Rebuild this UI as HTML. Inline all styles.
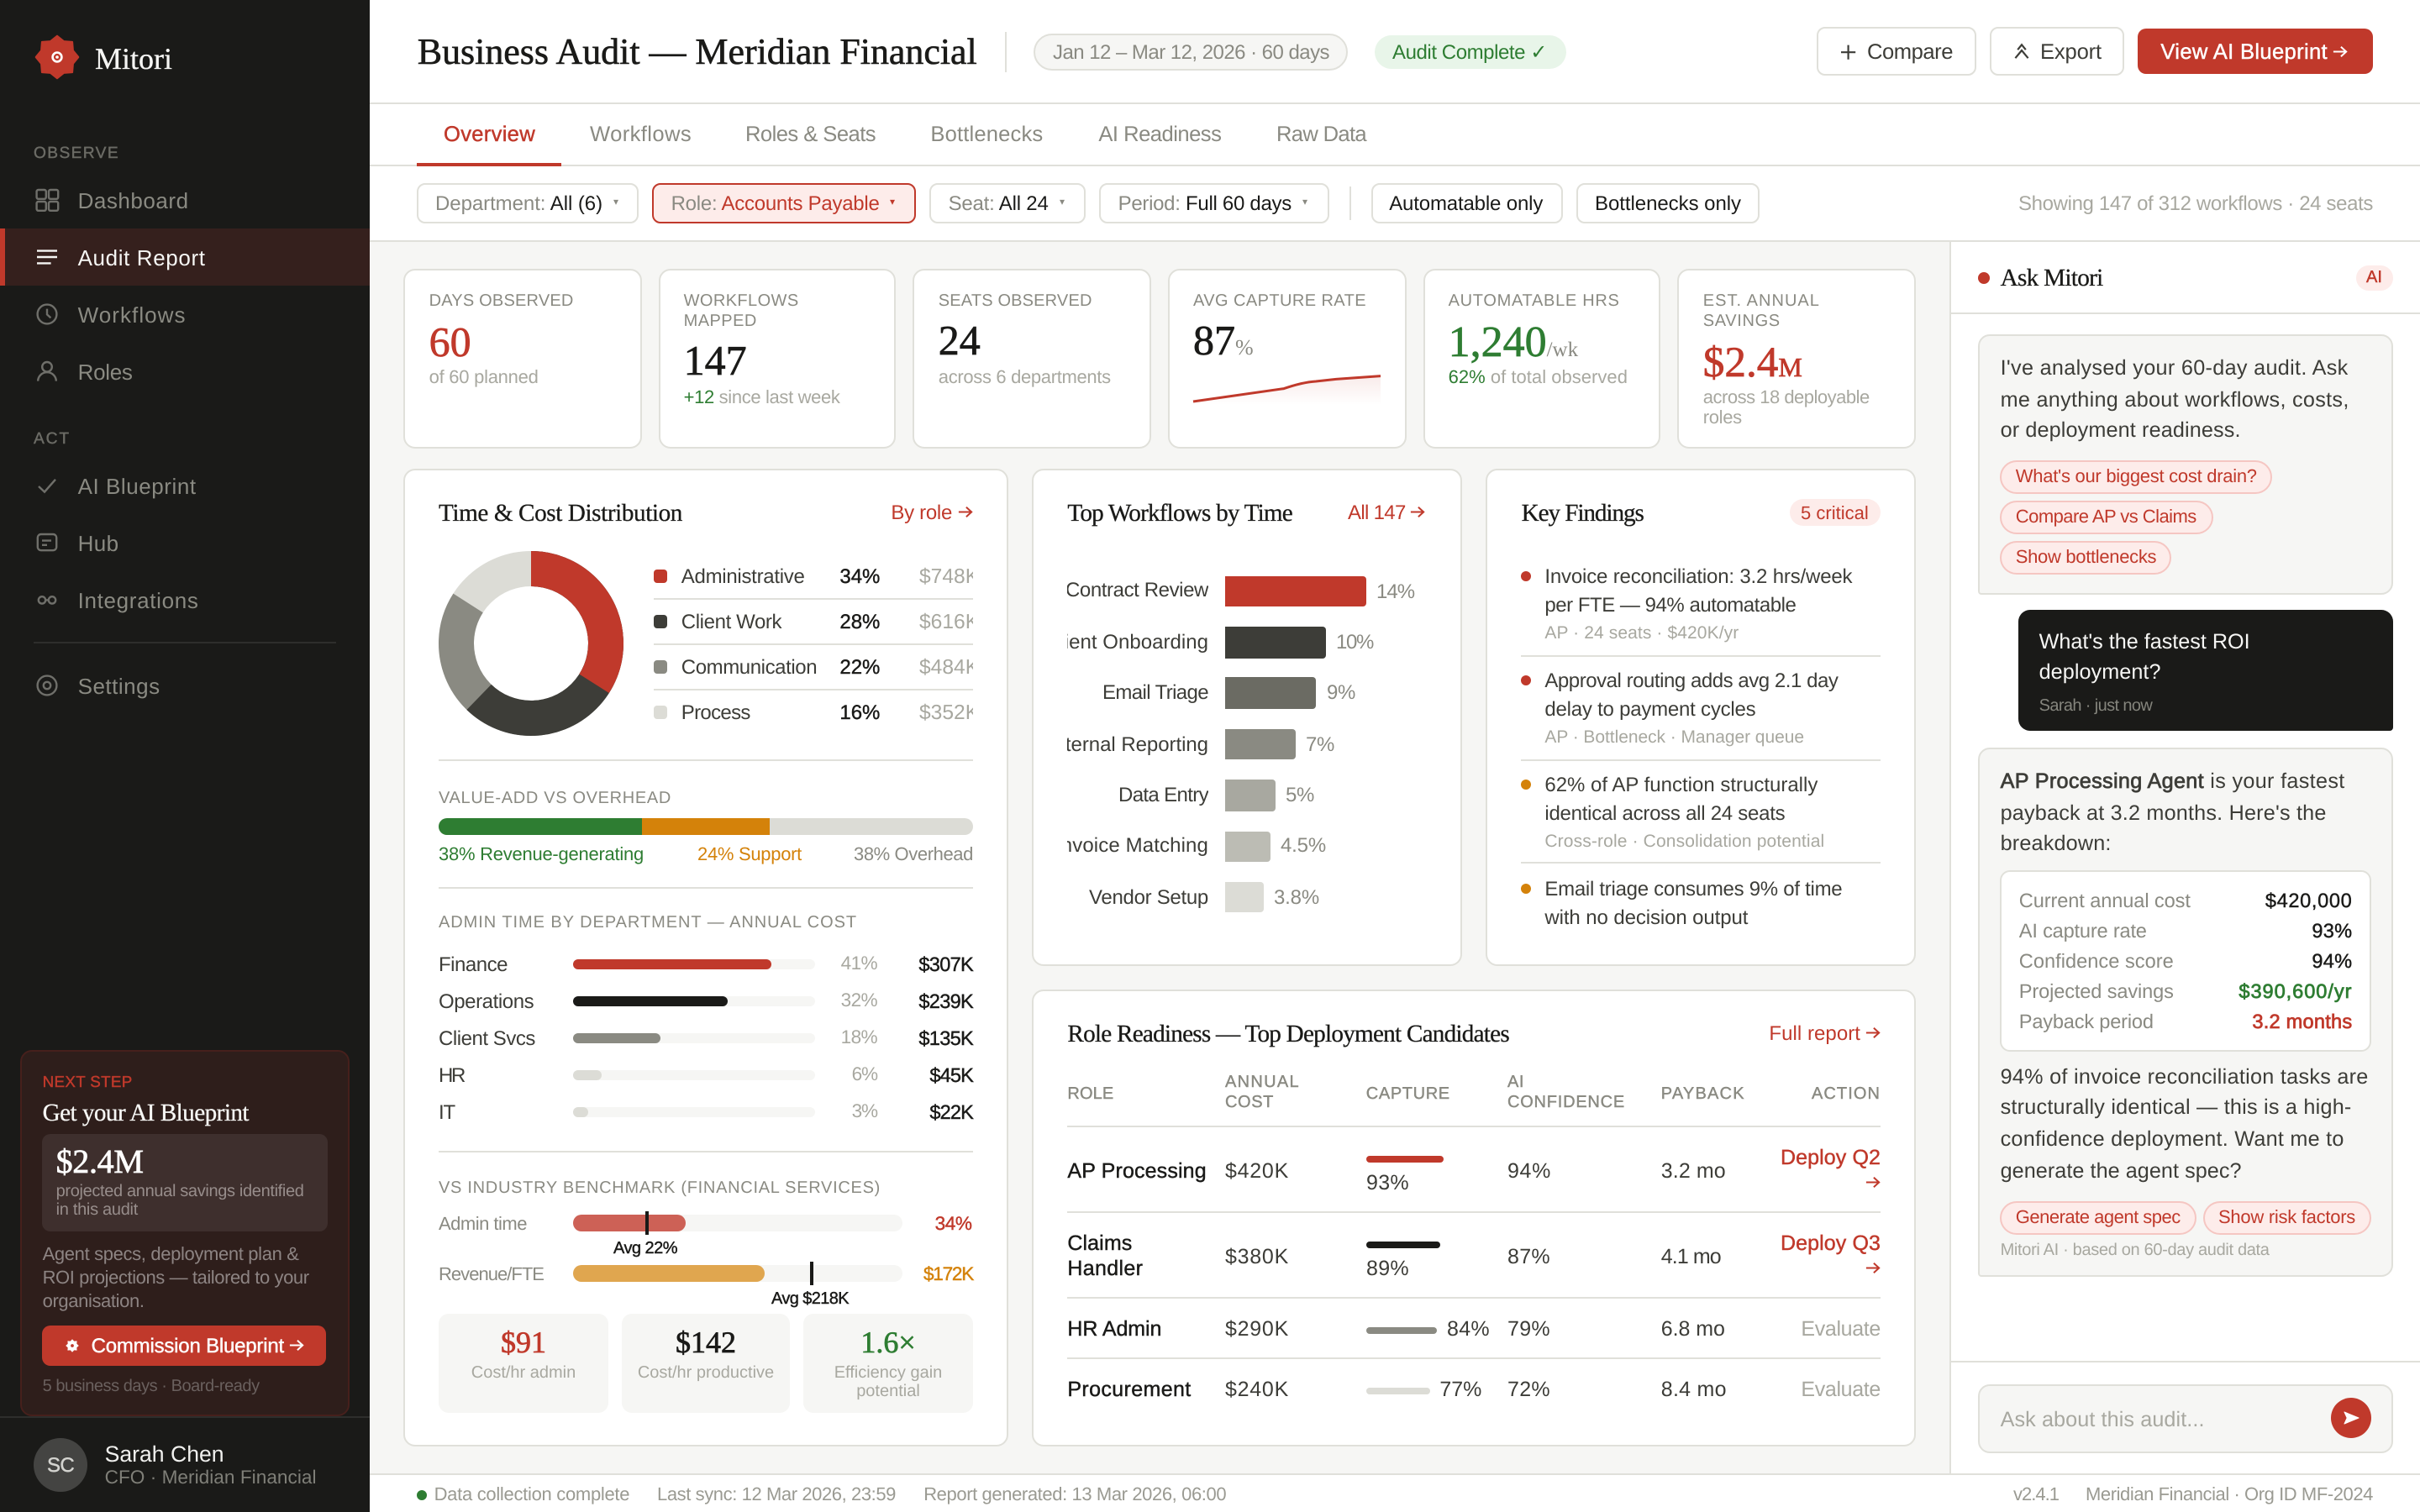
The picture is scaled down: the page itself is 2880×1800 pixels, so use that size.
<!DOCTYPE html>
<html lang="en"><head><meta charset="utf-8"><title>Business Audit — Meridian Financial</title>
<style>
html,body{margin:0;padding:0;width:2880px;height:1800px;overflow:hidden;background:#fff}
#app{position:absolute;left:0;top:0;width:1440px;height:900px;transform:scale(2);transform-origin:0 0;background:#fff;overflow:hidden;font-family:"Liberation Sans",Arial,sans-serif;text-rendering:geometricPrecision;-webkit-font-smoothing:antialiased;color:#3d3d38}
.t{position:absolute;white-space:nowrap;line-height:0;font-size:12px}
.s{font-family:"Liberation Serif","Times New Roman",serif;-webkit-text-stroke:.15px currentColor}
.n{font-family:"Liberation Serif","Times New Roman",serif;-webkit-text-stroke:.35px currentColor;font-size:25px}
.m{-webkit-text-stroke:.22px currentColor}
.m2{-webkit-text-stroke:.38px currentColor}
.b{position:absolute;box-sizing:border-box}
.card{position:absolute;box-sizing:border-box;background:#fff;border:1px solid #e0e0da;border-radius:7px}
.ln{position:absolute;height:1px;background:#e0e0da}
.g{color:#8a8a82}.l{color:#a8a8a0}.d{color:#1a1a18}.c{color:#3d3d38}.r{color:#c0392b}.gr{color:#2e7d32}.o{color:#d4820a}
.cap{font-size:10px}
.chip{position:absolute;box-sizing:border-box;height:24px;top:109px;border:1px solid #e0e0da;border-radius:5px;background:#fff}
.pill{position:absolute;box-sizing:border-box;background:#fdecea;border:1px solid #f5c6c2;border-radius:10px;height:20px}
.car{font-family:"DejaVu Sans",sans-serif;font-size:6px;color:#8a8a82}
svg{position:absolute;left:0;top:0;overflow:visible}
.wa{padding-right:12px}
svg.ar{position:absolute;left:auto;right:0;top:-3.75px;width:9px;height:7.5px;fill:none;stroke:currentColor;stroke-width:1.1;-webkit-text-stroke:0}
</style></head><body><div id="app">

<!-- SIDEBAR -->
<div class="b" style="left:0;top:0;width:220px;height:900px;background:#1a1a18"></div>
<div class="b" style="left:0;top:136px;width:220px;height:34px;background:#35201d;border-left:3px solid #c0392b"></div>
<svg width="220" height="900" viewBox="0 0 220 900" fill="none">
<polygon fill="#c0392b" stroke="#c0392b" stroke-width="1.1" stroke-linejoin="round" points="34,21.4 37.9,24.58 43,25 43.42,30.1 46.6,34 43.42,37.9 43,43 37.9,43.42 34,46.6 30.1,43.42 25,43 24.58,37.9 21.4,34 24.58,30.1 25,25 30.1,24.58"/>
<circle cx="34" cy="34" r="2.7" stroke="#fff" stroke-width="1.3"/><circle cx="34" cy="34" r=".9" fill="#fff"/>
<g stroke="#6f6f6a" stroke-width="1.2">
<rect x="21.8" y="113" width="5.6" height="5.4" rx="1"/><rect x="29" y="113" width="5.6" height="5.4" rx="1"/><rect x="21.8" y="120" width="5.6" height="5.4" rx="1"/><rect x="29" y="120" width="5.6" height="5.4" rx="1"/>
<circle cx="28" cy="187" r="5.7"/><path d="M28 183.8v3.4l2.2 2"/>
<circle cx="28" cy="218.4" r="2.9"/><path d="M22.6 226.8a5.4 5.2 0 0 1 10.8 0"/>
<path d="M23 289.5l3.5 3.3 6.5-7.4"/>
<rect x="22.4" y="318" width="11.2" height="9.6" rx="2"/><path d="M25 321.8h5.5M25 324.4h3"/>
<circle cx="25" cy="357.2" r="2.1"/><circle cx="31" cy="357.2" r="2.1"/><path d="M27 357.2h2"/>
<circle cx="28" cy="408" r="5.7"/><circle cx="28" cy="408" r="2.1"/>
</g>
<path d="M22 149.3h12M22 153h12M22 156.7h8.3" stroke="#f6f6f4" stroke-width="1.2"/>
</svg>
<div class="t s" style="left:56.5px;top:35.3px;font-size:18px;color:#f6f6f4;--w:46">Mitori</div>
<div class="t m" style="left:20px;top:92px;font-size:9.6px;color:#6b6b65;--w:51">OBSERVE</div>
<div class="t g" style="left:46.3px;top:119.8px;font-size:13px;--w:66">Dashboard</div>
<div class="t" style="left:46.3px;top:153.8px;font-size:13px;color:#f6f6f4;--w:76">Audit Report</div>
<div class="t g" style="left:46.3px;top:187.8px;font-size:13px;--w:64.5">Workflows</div>
<div class="t g" style="left:46.3px;top:221.8px;font-size:13px;--w:32.5">Roles</div>
<div class="t m" style="left:20px;top:262px;font-size:9.6px;color:#6b6b65;--w:22">ACT</div>
<div class="t g" style="left:46.3px;top:290.2px;font-size:13px;--w:70.5">AI Blueprint</div>
<div class="t g" style="left:46.3px;top:323.8px;font-size:13px;--w:24.5">Hub</div>
<div class="t g" style="left:46.3px;top:357.8px;font-size:13px;--w:72">Integrations</div>
<div class="ln" style="left:20px;top:382px;width:180px;background:#2e2e2c"></div>
<div class="t g" style="left:46.3px;top:408.8px;font-size:13px;--w:49">Settings</div>

<div class="b" style="left:12px;top:625px;width:196px;height:218px;background:#2e1e1b;border:1px solid #46201c;border-radius:7px"></div>
<div class="t r m" style="left:25.3px;top:644.4px;font-size:9.4px;--w:53.5">NEXT STEP</div>
<div class="t s" style="left:25.3px;top:663px;font-size:14.6px;color:#f6f6f4;--w:122.7">Get your AI Blueprint</div>
<div class="b" style="left:25px;top:675px;width:170px;height:58px;background:#3e2f2d;border-radius:5px"></div>
<div class="t n" style="left:33.3px;top:691.5px;font-size:20px;color:#fff;--w:52">$2.4M</div>
<div class="t" style="left:33.3px;top:710px;font-size:10px;color:#978d8b;--w:147.5">projected annual savings identified</div>
<div class="t" style="left:33.3px;top:721px;font-size:10px;color:#978d8b;--w:48.7">in this audit</div>
<div class="t" style="left:25.3px;top:746.5px;font-size:11px;color:#8d8483;--w:152.5">Agent specs, deployment plan &amp;</div>
<div class="t" style="left:25.3px;top:760.5px;font-size:11px;color:#8d8483;--w:158.5">ROI projections — tailored to your</div>
<div class="t" style="left:25.3px;top:774.5px;font-size:11px;color:#8d8483;--w:60.5">organisation.</div>
<div class="b" style="left:25px;top:789px;width:169px;height:24px;background:#c0392b;border-radius:5px"></div>
<svg width="220" height="900" viewBox="0 0 220 900"><g transform="translate(43 801) scale(.31) translate(-34 -34)"><polygon fill="#fff" points="34,21.4 37.56,25.41 43,25 42.59,30.44 46.6,34 42.59,37.56 43,43 37.56,42.59 34,46.6 30.44,42.59 25,43 25.41,37.56 21.4,34 25.41,30.44 25,25 30.44,25.41"/><circle cx="34" cy="34" r="3" fill="#c0392b"/></g></svg>
<div class="t m wa" style="left:54.3px;top:801px;font-size:12px;color:#fff;--w:126.7">Commission Blueprint<svg class="ar" viewBox="0 0 10 8"><path d="M.5 4h8.5M5.5.8 9 4 5.5 7.2"/></svg></div>
<div class="t" style="left:25.3px;top:825.5px;font-size:10px;color:#6a605e;--w:129">5 business days · Board-ready</div>
<div class="ln" style="left:0;top:843px;width:220px;background:#2e2e2c"></div>
<div class="b" style="left:20px;top:856px;width:32px;height:32px;border-radius:50%;background:#444442"></div>
<div class="t m" style="left:28px;top:872px;font-size:12px;color:#d4d4d0;--w:16">SC</div>
<div class="t" style="left:62.3px;top:865.5px;font-size:13.3px;color:#f0f0ee;--w:71">Sarah Chen</div>
<div class="t" style="left:62.3px;top:880.3px;font-size:11.3px;color:#7f7f78;--w:126">CFO · Meridian Financial</div>

<!-- HEADER -->
<div class="ln" style="left:220px;top:61px;width:1220px"></div>
<div class="t s d" style="left:248.4px;top:31px;font-size:22px;-webkit-text-stroke:.3px #1a1a18;--w:333">Business Audit — Meridian Financial</div>
<div class="b" style="left:598px;top:19px;width:1px;height:24px;background:#e0e0da"></div>
<div class="b" style="left:615px;top:20px;width:186.5px;height:22px;background:#f6f6f4;border:1px solid #e0e0da;border-radius:11px"></div>
<div class="t g" style="left:626.5px;top:31px;font-size:12px;--w:164.5">Jan 12 – Mar 12, 2026 · 60 days</div>
<div class="b" style="left:818.4px;top:21px;width:113.6px;height:20px;background:#e8f5e9;border-radius:10px"></div>
<div class="t gr" style="left:828.5px;top:31px;font-size:12px;font-family:'Liberation Sans','DejaVu Sans',sans-serif;--w:92">Audit Complete ✓</div>
<div class="b" style="left:1081px;top:16px;width:94.5px;height:29px;background:#fff;border:1px solid #e0e0da;border-radius:5px"></div>
<div class="t c" style="left:1111px;top:31px;font-size:12.8px;--w:51">Compare</div>
<div class="b" style="left:1184px;top:16px;width:79.5px;height:29px;background:#fff;border:1px solid #e0e0da;border-radius:5px"></div>
<svg width="1440" height="900" viewBox="0 0 1440 900" fill="none" stroke="#3d3d38" stroke-width="1.1"><path d="M1099.8 26.8v8.6M1095.5 31.1h8.6"/><path d="M1200.6 29.6l2.4-3 2.4 3M1199.2 34.6l3.8-4.6 3.8 4.6"/></svg>
<div class="t c" style="left:1214px;top:31px;font-size:12.8px;--w:36.5">Export</div>
<div class="b" style="left:1272px;top:17px;width:140px;height:27px;background:#c0392b;border-radius:5px"></div>
<div class="t m wa" style="left:1285.7px;top:31px;font-size:12.8px;color:#fff;--w:111.3">View AI Blueprint<svg class="ar" viewBox="0 0 10 8"><path d="M.5 4h8.5M5.5.8 9 4 5.5 7.2"/></svg></div>

<!-- TABS -->
<div class="ln" style="left:220px;top:98px;width:1220px"></div>
<div class="b" style="left:248px;top:97px;width:86px;height:2px;background:#c0392b"></div>
<div class="t r m" style="left:264px;top:80px;font-size:12.8px;--w:54.5">Overview</div>
<div class="t g" style="left:351px;top:80px;font-size:12.8px;--w:60.5">Workflows</div>
<div class="t g" style="left:443.5px;top:80px;font-size:12.8px;--w:77.5">Roles &amp; Seats</div>
<div class="t g" style="left:553.7px;top:80px;font-size:12.8px;--w:67">Bottlenecks</div>
<div class="t g" style="left:653.7px;top:80px;font-size:12.8px;--w:73">AI Readiness</div>
<div class="t g" style="left:759.5px;top:80px;font-size:12.8px;--w:53.5">Raw Data</div>

<!-- FILTERS -->
<div class="ln" style="left:220px;top:143px;width:1220px"></div>
<div class="chip" style="left:248px;width:131.5px"></div>
<div class="t" style="left:259px;top:121.4px;font-size:12px;--w:99.5"><span class="g">Department:</span> <span class="d">All (6)</span></div>
<div class="t car" style="left:365px;top:121.4px">▾</div>
<div class="chip" style="left:388px;width:156.5px;border-color:#c0392b;background:#fdecea"></div>
<div class="t" style="left:399.3px;top:121.4px;font-size:12px;--w:124"><span class="g">Role:</span> <span class="r">Accounts Payable</span></div>
<div class="t car" style="left:529.5px;top:121.4px;color:#c0392b">▾</div>
<div class="chip" style="left:553px;width:92.5px"></div>
<div class="t" style="left:564.3px;top:121.4px;font-size:12px;--w:59.5"><span class="g">Seat:</span> <span class="d">All 24</span></div>
<div class="t car" style="left:630.5px;top:121.4px">▾</div>
<div class="chip" style="left:654px;width:137px"></div>
<div class="t" style="left:665.3px;top:121.4px;font-size:12px;--w:103.2"><span class="g">Period:</span> <span class="d">Full 60 days</span></div>
<div class="t car" style="left:775px;top:121.4px">▾</div>
<div class="b" style="left:803px;top:111px;width:1px;height:20px;background:#e0e0da"></div>
<div class="chip" style="left:816px;width:113.5px"></div>
<div class="t d" style="left:826.6px;top:121.4px;font-size:12px;--w:91.5">Automatable only</div>
<div class="chip" style="left:938px;width:108.5px"></div>
<div class="t d" style="left:949px;top:121.4px;font-size:12px;--w:87">Bottlenecks only</div>
<div class="t l" style="right:28px;top:121.4px;font-size:12px;--w:211">Showing 147 of 312 workflows · 24 seats</div>

<!-- MAIN BG -->
<div class="b" style="left:220px;top:144px;width:940px;height:733px;background:#f6f6f4"></div>

<!-- KPI -->
<div class="card" style="left:240px;top:160px;width:141.7px;height:107px"></div>
<div class="t g cap" style="left:255.3px;top:180.2px;--w:86">DAYS OBSERVED</div>
<div class="t n r" style="left:255.3px;top:204.5px">60</div>
<div class="t l" style="left:255.3px;top:224.6px;font-size:11px;--w:65">of 60 planned</div>

<div class="card" style="left:391.7px;top:160px;width:141.7px;height:107px"></div>
<div class="t g cap" style="left:406.8px;top:180.2px;--w:68.5">WORKFLOWS</div>
<div class="t g cap" style="left:406.8px;top:192.2px;--w:43.6">MAPPED</div>
<div class="t n d" style="left:406.8px;top:216px">147</div>
<div class="t l" style="left:406.8px;top:236.6px;font-size:11px;--w:93"><span class="gr">+12</span> since last week</div>

<div class="card" style="left:543.3px;top:160px;width:141.7px;height:107px"></div>
<div class="t g cap" style="left:558.4px;top:180.2px;--w:91.4">SEATS OBSERVED</div>
<div class="t n d" style="left:558.4px;top:204px">24</div>
<div class="t l" style="left:558.4px;top:224.6px;font-size:11px;--w:102.5">across 6 departments</div>

<div class="card" style="left:695px;top:160px;width:141.7px;height:107px"></div>
<div class="t g cap" style="left:710px;top:180.2px;--w:103">AVG CAPTURE RATE</div>
<div class="t n d" style="left:710px;top:204px">87<span style="font-size:13px;color:#8a8a82;-webkit-text-stroke:0">%</span></div>
<svg width="1440" height="900" viewBox="0 0 1440 900" fill="none"><defs><linearGradient id="sp" x1="0" y1="0" x2="0" y2="1"><stop offset="0" stop-color="#c0392b" stop-opacity=".1"/><stop offset="1" stop-color="#c0392b" stop-opacity="0"/></linearGradient></defs>
<path d="M710 239L764 231.3Q775 227.5 783 227L795 225.7L821.5 223.8V241H710Z" fill="url(#sp)"/>
<path d="M710 239L764 231.3Q775 227.5 783 227L795 225.7L821.5 223.8" stroke="#c0392b" stroke-width="1.5"/></svg>

<div class="card" style="left:846.7px;top:160px;width:141.7px;height:107px"></div>
<div class="t g cap" style="left:861.8px;top:180.2px;--w:102">AUTOMATABLE HRS</div>
<div class="t n gr" style="left:861.8px;top:204px;font-size:26px">1,240<span style="font-size:12.5px;color:#8a8a82;-webkit-text-stroke:0">/wk</span></div>
<div class="t l" style="left:861.8px;top:224.6px;font-size:11px;--w:106.7"><span class="gr">62%</span> of total observed</div>

<div class="card" style="left:998.3px;top:160px;width:141.7px;height:107px"></div>
<div class="t g cap" style="left:1013.4px;top:180.2px;--w:69.6">EST. ANNUAL</div>
<div class="t g cap" style="left:1013.4px;top:192.2px;--w:46">SAVINGS</div>
<div class="t n r" style="left:1013.4px;top:216px;font-size:25.6px">$2.4<span style="font-size:16px">M</span></div>
<div class="t l" style="left:1013.4px;top:236.6px;font-size:11px;--w:99">across 18 deployable</div>
<div class="t l" style="left:1013.4px;top:248.8px;font-size:11px;--w:23">roles</div>

<!-- TIME & COST -->
<div class="card" style="left:240px;top:279px;width:360px;height:582px"></div>
<div class="t s d" style="left:261px;top:305.5px;font-size:14.6px;--w:145">Time &amp; Cost Distribution</div>
<div class="t r wa" style="right:861.5px;top:305px;font-size:12px;--w:48.3">By role<svg class="ar" viewBox="0 0 10 8"><path d="M.5 4h8.5M5.5.8 9 4 5.5 7.2"/></svg></div>
<svg width="1440" height="900" viewBox="0 0 1440 900" fill="none" stroke-width="21">
<g transform="rotate(-90 316 383)">
<circle cx="316" cy="383" r="44.5" stroke="#dcdcd6"/>
<circle cx="316" cy="383" r="44.5" stroke="#8a8a82" stroke-dasharray="235 280" />
<circle cx="316" cy="383" r="44.5" stroke="#3d3d38" stroke-dasharray="174 280"/>
<circle cx="316" cy="383" r="44.5" stroke="#c0392b" stroke-dasharray="95.07 280"/>
</g></svg>
<div class="b" style="left:389px;top:339px;width:8px;height:8px;border-radius:2px;background:#c0392b"></div>
<div class="b" style="left:389px;top:366px;width:8px;height:8px;border-radius:2px;background:#3d3d38"></div>
<div class="b" style="left:389px;top:393px;width:8px;height:8px;border-radius:2px;background:#8a8a82"></div>
<div class="b" style="left:389px;top:420px;width:8px;height:8px;border-radius:2px;background:#dcdcd6"></div>
<div class="t c" style="left:405.4px;top:343px;font-size:12px;--w:73.4">Administrative</div>
<div class="t c" style="left:405.4px;top:370px;font-size:12px;--w:59.7">Client Work</div>
<div class="t c" style="left:405.4px;top:397px;font-size:12px;--w:80.7">Communication</div>
<div class="t c" style="left:405.4px;top:424px;font-size:12px;--w:41">Process</div>
<div class="t d m" style="left:499.7px;top:343px;font-size:12px;--w:24">34%</div>
<div class="t d m" style="left:499.7px;top:370px;font-size:12px;--w:24">28%</div>
<div class="t d m" style="left:499.7px;top:397px;font-size:12px;--w:24">22%</div>
<div class="t d m" style="left:499.7px;top:424px;font-size:12px;--w:24">16%</div>
<div class="b" style="left:547px;top:330px;width:32px;height:104px;overflow:hidden">
<div class="t l" style="left:0;top:13px;font-size:12.3px">$748K</div>
<div class="t l" style="left:0;top:40px;font-size:12.3px">$616K</div>
<div class="t l" style="left:0;top:67px;font-size:12.3px">$484K</div>
<div class="t l" style="left:0;top:94px;font-size:12.3px">$352K</div></div>
<div class="ln" style="left:389px;top:356px;width:190px"></div>
<div class="ln" style="left:389px;top:383px;width:190px"></div>
<div class="ln" style="left:389px;top:410px;width:190px"></div>
<div class="ln" style="left:261px;top:452px;width:318px"></div>
<div class="t g cap" style="left:261px;top:476.2px;--w:138.5">VALUE-ADD VS OVERHEAD</div>
<div class="b" style="left:261px;top:487px;width:318px;height:10px;border-radius:5px;overflow:hidden;background:#dcdcd6">
<div class="b" style="left:0;top:0;width:121px;height:10px;background:#2e7d32"></div>
<div class="b" style="left:121px;top:0;width:76px;height:10px;background:#d4820a"></div></div>
<div class="t gr" style="left:261px;top:508.6px;font-size:11px;--w:122">38% Revenue-generating</div>
<div class="t o" style="left:415px;top:508.6px;font-size:11px;--w:62">24% Support</div>
<div class="t g" style="right:861px;top:508.6px;font-size:11px;--w:71">38% Overhead</div>
<div class="ln" style="left:261px;top:528px;width:318px"></div>
<div class="t g cap" style="left:261px;top:550.3px;--w:249">ADMIN TIME BY DEPARTMENT — ANNUAL COST</div>

<div class="t c" style="left:261px;top:574.2px;font-size:12px;--w:41">Finance</div>
<div class="b" style="left:341px;top:571px;width:144px;height:6px;border-radius:3px;background:#f6f6f4"><div class="b" style="left:0;top:0;width:118px;height:6px;border-radius:3px;background:#c0392b"></div></div>
<div class="t l" style="right:918px;top:574.2px;font-size:11.3px;--w:21.7">41%</div>
<div class="t d m" style="right:861px;top:574.2px;font-size:11.8px;--w:32.3">$307K</div>
<div class="t c" style="left:261px;top:596.2px;font-size:12px;--w:56.6">Operations</div>
<div class="b" style="left:341px;top:593px;width:144px;height:6px;border-radius:3px;background:#f6f6f4"><div class="b" style="left:0;top:0;width:92px;height:6px;border-radius:3px;background:#1a1a18"></div></div>
<div class="t l" style="right:918px;top:596.2px;font-size:11.3px;--w:21.7">32%</div>
<div class="t d m" style="right:861px;top:596.2px;font-size:11.8px;--w:32.3">$239K</div>
<div class="t c" style="left:261px;top:618.2px;font-size:12px;--w:57.5">Client Svcs</div>
<div class="b" style="left:341px;top:615px;width:144px;height:6px;border-radius:3px;background:#f6f6f4"><div class="b" style="left:0;top:0;width:52px;height:6px;border-radius:3px;background:#8a8a82"></div></div>
<div class="t l" style="right:918px;top:618.2px;font-size:11.3px;--w:21.7">18%</div>
<div class="t d m" style="right:861px;top:618.2px;font-size:11.8px;--w:32.3">$135K</div>
<div class="t c" style="left:261px;top:640.2px;font-size:12px;--w:15">HR</div>
<div class="b" style="left:341px;top:637px;width:144px;height:6px;border-radius:3px;background:#f6f6f4"><div class="b" style="left:0;top:0;width:17px;height:6px;border-radius:3px;background:#dcdcd6"></div></div>
<div class="t l" style="right:918px;top:640.2px;font-size:11.3px;--w:15.2">6%</div>
<div class="t d m" style="right:861px;top:640.2px;font-size:11.8px;--w:25.8">$45K</div>
<div class="t c" style="left:261px;top:662.2px;font-size:12px;--w:9.5">IT</div>
<div class="b" style="left:341px;top:659px;width:144px;height:6px;border-radius:3px;background:#f6f6f4"><div class="b" style="left:0;top:0;width:9px;height:6px;border-radius:3px;background:#dcdcd6"></div></div>
<div class="t l" style="right:918px;top:662.2px;font-size:11.3px;--w:15.2">3%</div>
<div class="t d m" style="right:861px;top:662.2px;font-size:11.8px;--w:25.8">$22K</div>
<div class="ln" style="left:261px;top:685px;width:318px"></div>
<div class="t g cap" style="left:261px;top:707.6px;--w:263">VS INDUSTRY BENCHMARK (FINANCIAL SERVICES)</div>

<div class="t g" style="left:261px;top:728.7px;font-size:11px;--w:52.5">Admin time</div>
<div class="b" style="left:341px;top:723px;width:196px;height:10px;border-radius:5px;background:#f6f6f4"><div class="b" style="left:0;top:0;width:67px;height:10px;border-radius:5px;background:#cd6156"></div></div>
<div class="b" style="left:384px;top:721px;width:2px;height:14px;background:#1a1a18"></div>
<div class="t d m" style="left:365px;top:744px;font-size:10px;--w:38">Avg 22%</div>
<div class="t r m" style="right:861.7px;top:728.7px;font-size:11.3px;--w:22">34%</div>
<div class="t g" style="left:261px;top:758.6px;font-size:11px;--w:62.5">Revenue/FTE</div>
<div class="b" style="left:341px;top:753px;width:196px;height:10px;border-radius:5px;background:#f6f6f4"><div class="b" style="left:0;top:0;width:114px;height:10px;border-radius:5px;background:#e0a64f"></div></div>
<div class="b" style="left:482px;top:751px;width:2px;height:14px;background:#1a1a18"></div>
<div class="t d m" style="left:459px;top:774px;font-size:10px;--w:46">Avg $218K</div>
<div class="t o m" style="right:861px;top:758.6px;font-size:11.3px;--w:29.5">$172K</div>

<div class="b" style="left:261px;top:782px;width:101px;height:59px;border-radius:6px;background:#f6f6f4"></div>
<div class="b" style="left:370px;top:782px;width:100px;height:59px;border-radius:6px;background:#f6f6f4"></div>
<div class="b" style="left:478px;top:782px;width:101px;height:59px;border-radius:6px;background:#f6f6f4"></div>
<div class="t n r" style="left:261px;width:101px;text-align:center;top:799px;font-size:18px">$91</div>
<div class="t n d" style="left:370px;width:100px;text-align:center;top:799px;font-size:18px">$142</div>
<div class="t n gr" style="left:478px;width:101px;text-align:center;top:799px;font-size:18px">1.6×</div>
<div class="t l" style="left:261px;width:101px;text-align:center;top:818px;font-size:10px">Cost/hr admin</div>
<div class="t l" style="left:370px;width:100px;text-align:center;top:818px;font-size:10px">Cost/hr productive</div>
<div class="t l" style="left:478px;width:101px;text-align:center;top:818px;font-size:10px">Efficiency gain</div>
<div class="t l" style="left:478px;width:101px;text-align:center;top:829px;font-size:10px">potential</div>

<!-- TOP WORKFLOWS -->
<div class="card" style="left:614px;top:279px;width:256px;height:296px"></div>
<div class="t s d" style="left:635.2px;top:305.5px;font-size:14.6px;--w:133.8">Top Workflows by Time</div>
<div class="t r wa" style="right:591.7px;top:305px;font-size:12px;--w:46.3">All 147<svg class="ar" viewBox="0 0 10 8"><path d="M.5 4h8.5M5.5.8 9 4 5.5 7.2"/></svg></div>
<div class="b" style="left:635px;top:335px;width:84px;height:216px;overflow:hidden">
<div class="t c" style="right:0;top:16.2px;font-size:12px;--w:85">Contract Review</div>
<div class="t c" style="right:0;top:46.6px;font-size:12px;--w:97">Client Onboarding</div>
<div class="t c" style="right:0;top:77.4px;font-size:12px;--w:63">Email Triage</div>
<div class="t c" style="right:0;top:107.9px;font-size:12px;--w:95">Internal Reporting</div>
<div class="t c" style="right:0;top:137.7px;font-size:12px;--w:53.5">Data Entry</div>
<div class="t c" style="right:0;top:168.4px;font-size:12px;--w:91">Invoice Matching</div>
<div class="t c" style="right:0;top:198.8px;font-size:12px;--w:71">Vendor Setup</div>
</div>
<div class="b" style="left:729px;top:342.5px;width:84px;height:18.5px;background:#c0392b;border-radius:0 2px 2px 0"></div>
<div class="t g" style="left:819px;top:351.7px;font-size:12px;--w:22.6">14%</div>
<div class="b" style="left:729px;top:373px;width:60px;height:18.5px;background:#3d3d38;border-radius:0 2px 2px 0"></div>
<div class="t g" style="left:795px;top:382px;font-size:12px;--w:22">10%</div>
<div class="b" style="left:729px;top:403.3px;width:54px;height:18.5px;background:#6b6b63;border-radius:0 2px 2px 0"></div>
<div class="t g" style="left:789.5px;top:412.4px;font-size:12px;--w:17">9%</div>
<div class="b" style="left:729px;top:433.7px;width:42px;height:18.5px;background:#8a8a82;border-radius:0 2px 2px 0"></div>
<div class="t g" style="left:777px;top:442.9px;font-size:12px;--w:17">7%</div>
<div class="b" style="left:729px;top:464.2px;width:30px;height:18.5px;background:#a8a8a0;border-radius:0 2px 2px 0"></div>
<div class="t g" style="left:765px;top:473.3px;font-size:12px;--w:17">5%</div>
<div class="b" style="left:729px;top:494.5px;width:27px;height:18.5px;background:#bcbcb4;border-radius:0 2px 2px 0"></div>
<div class="t g" style="left:762px;top:503.4px;font-size:12px;--w:27">4.5%</div>
<div class="b" style="left:729px;top:524.7px;width:23px;height:18.5px;background:#dcdcd6;border-radius:0 2px 2px 0"></div>
<div class="t g" style="left:758px;top:533.8px;font-size:12px;--w:27">3.8%</div>

<!-- KEY FINDINGS -->
<div class="card" style="left:884px;top:279px;width:256px;height:296px"></div>
<div class="t s d" style="left:905.3px;top:305.5px;font-size:14.6px;--w:72.6">Key Findings</div>
<div class="b" style="left:1064.5px;top:297px;width:54.5px;height:16px;border-radius:8px;background:#fdecea"></div>
<div class="t r" style="left:1071.5px;top:305.5px;font-size:11px;--w:40.4">5 critical</div>
<div class="b" style="left:905.3px;top:340.3px;width:6px;height:6px;border-radius:50%;background:#c0392b"></div>
<div class="t c" style="left:919.2px;top:343.2px;font-size:12px;--w:183">Invoice reconciliation: 3.2 hrs/week</div>
<div class="t c" style="left:919.2px;top:360px;font-size:12px;--w:149.5">per FTE — 94% automatable</div>
<div class="t l" style="left:919.2px;top:376.6px;font-size:10.5px;--w:115.5">AP · 24 seats · $420K/yr</div>
<div class="ln" style="left:905px;top:389.5px;width:214px"></div>
<div class="b" style="left:905.3px;top:402.4px;width:6px;height:6px;border-radius:50%;background:#c0392b"></div>
<div class="t c" style="left:919.2px;top:405.3px;font-size:12px;--w:174.5">Approval routing adds avg 2.1 day</div>
<div class="t c" style="left:919.2px;top:422.1px;font-size:12px;--w:125.5">delay to payment cycles</div>
<div class="t l" style="left:919.2px;top:438.7px;font-size:10.5px;--w:154.3">AP · Bottleneck · Manager queue</div>
<div class="ln" style="left:905px;top:451.5px;width:214px"></div>
<div class="b" style="left:905.3px;top:464.3px;width:6px;height:6px;border-radius:50%;background:#d4820a"></div>
<div class="t c" style="left:919.2px;top:467.2px;font-size:12px;--w:162.5">62% of AP function structurally</div>
<div class="t c" style="left:919.2px;top:484px;font-size:12px;--w:143">identical across all 24 seats</div>
<div class="t l" style="left:919.2px;top:500.6px;font-size:10.5px;--w:166.5">Cross-role · Consolidation potential</div>
<div class="ln" style="left:905px;top:513px;width:214px"></div>
<div class="b" style="left:905.3px;top:526.4px;width:6px;height:6px;border-radius:50%;background:#d4820a"></div>
<div class="t c" style="left:919.2px;top:529.3px;font-size:12px;--w:177">Email triage consumes 9% of time</div>
<div class="t c" style="left:919.2px;top:546px;font-size:12px;--w:121">with no decision output</div>

<!-- ROLE READINESS -->
<div class="card" style="left:614px;top:589px;width:526px;height:272px"></div>
<div class="t s d" style="left:635.2px;top:615.7px;font-size:14.6px;--w:262.8">Role Readiness — Top Deployment Candidates</div>
<div class="t r wa" style="right:321px;top:615px;font-size:12px;--w:66.3">Full report<svg class="ar" viewBox="0 0 10 8"><path d="M.5 4h8.5M5.5.8 9 4 5.5 7.2"/></svg></div>
<div class="t g cap m" style="left:635.2px;top:651.6px;--w:27.5">ROLE</div>
<div class="t g cap m" style="left:729px;top:645.2px;--w:44.5">ANNUAL</div>
<div class="t g cap m" style="left:729px;top:657.2px;--w:29">COST</div>
<div class="t g cap m" style="left:812.9px;top:651.6px;--w:50">CAPTURE</div>
<div class="t g cap m" style="left:897px;top:645.2px;--w:10">AI</div>
<div class="t g cap m" style="left:897px;top:657.2px;--w:70">CONFIDENCE</div>
<div class="t g cap m" style="left:988.4px;top:651.6px;--w:50">PAYBACK</div>
<div class="t g cap m" style="right:321px;top:651.6px;--w:41">ACTION</div>
<div class="ln" style="left:635px;top:670px;width:484px"></div>
<div class="ln" style="left:635px;top:721px;width:484px"></div>
<div class="ln" style="left:635px;top:772px;width:484px"></div>
<div class="ln" style="left:635px;top:808px;width:484px"></div>

<div class="t d m" style="left:635.2px;top:697px;font-size:12.5px;--w:82.7">AP Processing</div>
<div class="t c" style="left:729px;top:697px;font-size:12.5px;--w:38">$420K</div>
<div class="b" style="left:813px;top:688px;width:46.2px;height:4px;border-radius:2px;background:#c0392b"></div>
<div class="t c" style="left:813px;top:703.7px;font-size:12.5px;--w:25.5">93%</div>
<div class="t c" style="left:897px;top:697px;font-size:12.5px;--w:26">94%</div>
<div class="t c" style="left:988.4px;top:697px;font-size:12.5px;--w:38.5">3.2 mo</div>
<div class="t r m" style="right:321px;top:689.2px;font-size:12.5px;--w:59.5">Deploy Q2</div>
<div class="t r" style="right:321px;top:703.9px;font-size:12.5px;padding-right:9px"><svg class="ar" viewBox="0 0 10 8"><path d="M.5 4h8.5M5.5.8 9 4 5.5 7.2"/></svg></div>

<div class="t d m" style="left:635.2px;top:740px;font-size:12.5px;--w:38.5">Claims</div>
<div class="t d m" style="left:635.2px;top:755px;font-size:12.5px;--w:45">Handler</div>
<div class="t c" style="left:729px;top:748px;font-size:12.5px;--w:38">$380K</div>
<div class="b" style="left:813px;top:739px;width:44px;height:4px;border-radius:2px;background:#1a1a18"></div>
<div class="t c" style="left:813px;top:755px;font-size:12.5px;--w:25.5">89%</div>
<div class="t c" style="left:897px;top:748px;font-size:12.5px;--w:25.5">87%</div>
<div class="t c" style="left:988.4px;top:748px;font-size:12.5px;--w:35.5">4.1 mo</div>
<div class="t r m" style="right:321px;top:740px;font-size:12.5px;--w:59.5">Deploy Q3</div>
<div class="t r" style="right:321px;top:755px;font-size:12.5px;padding-right:9px"><svg class="ar" viewBox="0 0 10 8"><path d="M.5 4h8.5M5.5.8 9 4 5.5 7.2"/></svg></div>

<div class="t d m" style="left:635.2px;top:790.8px;font-size:12.5px;--w:56">HR Admin</div>
<div class="t c" style="left:729px;top:790.8px;font-size:12.5px;--w:38">$290K</div>
<div class="b" style="left:813px;top:790px;width:42px;height:4px;border-radius:2px;background:#8a8a82"></div>
<div class="t c" style="left:861px;top:790.8px;font-size:12.5px;--w:25.5">84%</div>
<div class="t c" style="left:897px;top:790.8px;font-size:12.5px;--w:25.5">79%</div>
<div class="t c" style="left:988.4px;top:790.8px;font-size:12.5px;--w:38">6.8 mo</div>
<div class="t l" style="right:321px;top:790.8px;font-size:12.5px;--w:47.3">Evaluate</div>

<div class="t d m" style="left:635.2px;top:827px;font-size:12.5px;--w:73.6">Procurement</div>
<div class="t c" style="left:729px;top:827px;font-size:12.5px;--w:38">$240K</div>
<div class="b" style="left:813px;top:826px;width:38px;height:4px;border-radius:2px;background:#dcdcd6"></div>
<div class="t c" style="left:856.7px;top:827px;font-size:12.5px;--w:25">77%</div>
<div class="t c" style="left:897px;top:827px;font-size:12.5px;--w:25.5">72%</div>
<div class="t c" style="left:988.4px;top:827px;font-size:12.5px;--w:39">8.4 mo</div>
<div class="t l" style="right:321px;top:827px;font-size:12.5px;--w:47.3">Evaluate</div>

<!-- AI PANEL -->
<div class="b" style="left:1160px;top:144px;width:1px;height:733px;background:#e0e0da"></div>
<div class="ln" style="left:1161px;top:186px;width:279px"></div>
<div class="b" style="left:1177px;top:161.5px;width:7px;height:7px;border-radius:50%;background:#c0392b"></div>
<div class="t s d" style="left:1190.3px;top:166.2px;font-size:14.6px;--w:61">Ask Mitori</div>
<div class="b" style="left:1402px;top:158px;width:22px;height:15px;border-radius:8px;background:#fdecea"></div>
<div class="t r m" style="left:1408px;top:165.8px;font-size:10px;--w:9.5">AI</div>

<div class="b" style="left:1177px;top:199px;width:247px;height:154.5px;background:#f6f6f4;border:1px solid #e0e0da;border-radius:7px 7px 7px 2px"></div>
<div class="t c" style="left:1190.3px;top:218.7px;font-size:12.6px;--w:207">I've analysed your 60-day audit. Ask</div>
<div class="t c" style="left:1190.3px;top:237.7px;font-size:12.6px;--w:207.5">me anything about workflows, costs,</div>
<div class="t c" style="left:1190.3px;top:255.9px;font-size:12.6px;--w:143">or deployment readiness.</div>
<div class="pill" style="left:1190px;top:274px;width:161.7px"></div>
<div class="t r" style="left:1199.4px;top:284px;font-size:11px;--w:143.5">What's our biggest cost drain?</div>
<div class="pill" style="left:1190px;top:298px;width:126.5px"></div>
<div class="t r" style="left:1199.4px;top:308px;font-size:11px;--w:107.5">Compare AP vs Claims</div>
<div class="pill" style="left:1190px;top:322px;width:102px"></div>
<div class="t r" style="left:1199.4px;top:332.3px;font-size:11px;--w:83.7">Show bottlenecks</div>

<div class="b" style="left:1201px;top:363px;width:223px;height:71.5px;background:#1a1a18;border-radius:7px 7px 2px 7px"></div>
<div class="t" style="left:1213.3px;top:381.6px;font-size:12.6px;color:#f6f6f4;--w:125.5">What's the fastest ROI</div>
<div class="t" style="left:1213.3px;top:399.6px;font-size:12.6px;color:#f6f6f4;--w:72.5">deployment?</div>
<div class="t" style="left:1213.3px;top:420.6px;font-size:10px;color:#85857d;--w:67.3">Sarah · just now</div>

<div class="b" style="left:1177px;top:445px;width:247px;height:315px;background:#f6f6f4;border:1px solid #e0e0da;border-radius:7px 7px 7px 2px"></div>
<div class="t c" style="left:1190.3px;top:464.6px;font-size:12.6px;--w:205"><span class="m2">AP Processing Agent</span> is your fastest</div>
<div class="t c" style="left:1190.3px;top:483.7px;font-size:12.6px;--w:194">payback at 3.2 months. Here's the</div>
<div class="t c" style="left:1190.3px;top:501.6px;font-size:12.6px;--w:66">breakdown:</div>
<div class="b" style="left:1190px;top:518px;width:221px;height:107.5px;background:#fff;border:1px solid #e0e0da;border-radius:6px"></div>
<div class="t g" style="left:1201.4px;top:536px;font-size:11.8px;--w:102">Current annual cost</div>
<div class="t g" style="left:1201.4px;top:554px;font-size:11.8px;--w:76">AI capture rate</div>
<div class="t g" style="left:1201.4px;top:572px;font-size:11.8px;--w:92">Confidence score</div>
<div class="t g" style="left:1201.4px;top:590px;font-size:11.8px;--w:92">Projected savings</div>
<div class="t g" style="left:1201.4px;top:608px;font-size:11.8px;--w:80">Payback period</div>
<div class="t d m" style="right:40.3px;top:536px;font-size:11.8px;--w:51.8">$420,000</div>
<div class="t d m" style="right:40.3px;top:554px;font-size:11.8px;--w:24">93%</div>
<div class="t d m" style="right:40.3px;top:572px;font-size:11.8px;--w:24">94%</div>
<div class="t gr m2" style="right:40.3px;top:590px;font-size:11.8px;--w:67.5">$390,600/yr</div>
<div class="t r m2" style="right:40.3px;top:608px;font-size:11.8px;--w:59.5">3.2 months</div>
<div class="t c" style="left:1190.3px;top:640.7px;font-size:12.6px;--w:219">94% of invoice reconciliation tasks are</div>
<div class="t c" style="left:1190.3px;top:658.6px;font-size:12.6px;--w:209">structurally identical — this is a high-</div>
<div class="t c" style="left:1190.3px;top:677.7px;font-size:12.6px;--w:204.5">confidence deployment. Want me to</div>
<div class="t c" style="left:1190.3px;top:696.7px;font-size:12.6px;--w:143.5">generate the agent spec?</div>
<div class="pill" style="left:1190px;top:714.5px;width:117px"></div>
<div class="t r" style="left:1199.4px;top:725px;font-size:11px;--w:98">Generate agent spec</div>
<div class="pill" style="left:1311px;top:714.5px;width:100px"></div>
<div class="t r" style="left:1320px;top:725px;font-size:11px;--w:81.5">Show risk factors</div>
<div class="t l" style="left:1190.3px;top:744.7px;font-size:10px;--w:160">Mitori AI · based on 60-day audit data</div>

<div class="ln" style="left:1161px;top:810px;width:279px"></div>
<div class="b" style="left:1177px;top:823.5px;width:247px;height:41px;background:#f6f6f4;border:1px solid #e0e0da;border-radius:7px"></div>
<div class="t l" style="left:1190.3px;top:845px;font-size:12.6px;--w:121.5">Ask about this audit...</div>
<div class="b" style="left:1387px;top:832px;width:24px;height:24px;border-radius:50%;background:#c0392b"></div>
<svg width="1440" height="900" viewBox="0 0 1440 900"><path d="M1395 840.5L1403.5 844L1395 847.5L1396.6 844Z" fill="#fff" stroke="#fff" stroke-width=".5" stroke-linejoin="round"/></svg>

<!-- STATUS BAR -->
<div class="b" style="left:220px;top:877px;width:1220px;height:23px;background:#fff;border-top:1px solid #e0e0da"></div>
<div class="b" style="left:248px;top:886.6px;width:6px;height:6px;border-radius:50%;background:#2e7d32"></div>
<div class="t l" style="left:258.3px;top:889.6px;font-size:11px;color:#9a9a92;--w:116.3">Data collection complete</div>
<div class="t l" style="left:391px;top:889.6px;font-size:11px;color:#9a9a92;--w:142">Last sync: 12 Mar 2026, 23:59</div>
<div class="t l" style="left:549.6px;top:889.6px;font-size:11px;color:#9a9a92;--w:180">Report generated: 13 Mar 2026, 06:00</div>
<div class="t l" style="left:1198px;top:889.6px;font-size:11px;color:#9a9a92;--w:27">v2.4.1</div>
<div class="t l" style="left:1241px;top:889.6px;font-size:11px;color:#9a9a92;--w:171">Meridian Financial · Org ID MF-2024</div>
</div>
<script>
document.querySelectorAll('.t').forEach(function(e){
 var w=parseFloat(getComputedStyle(e).getPropertyValue('--w'));
 if(!w)return;
 e.style.letterSpacing='0px';
 var pad=parseFloat(getComputedStyle(e).paddingRight)||0;
 var r=document.createRange();r.selectNodeContents(e);
 var m=e.getBoundingClientRect().width/2;
 var n=e.textContent.length;
 e.style.letterSpacing=((w-m)/n).toFixed(3)+'px';
});
</script>
</body></html>
